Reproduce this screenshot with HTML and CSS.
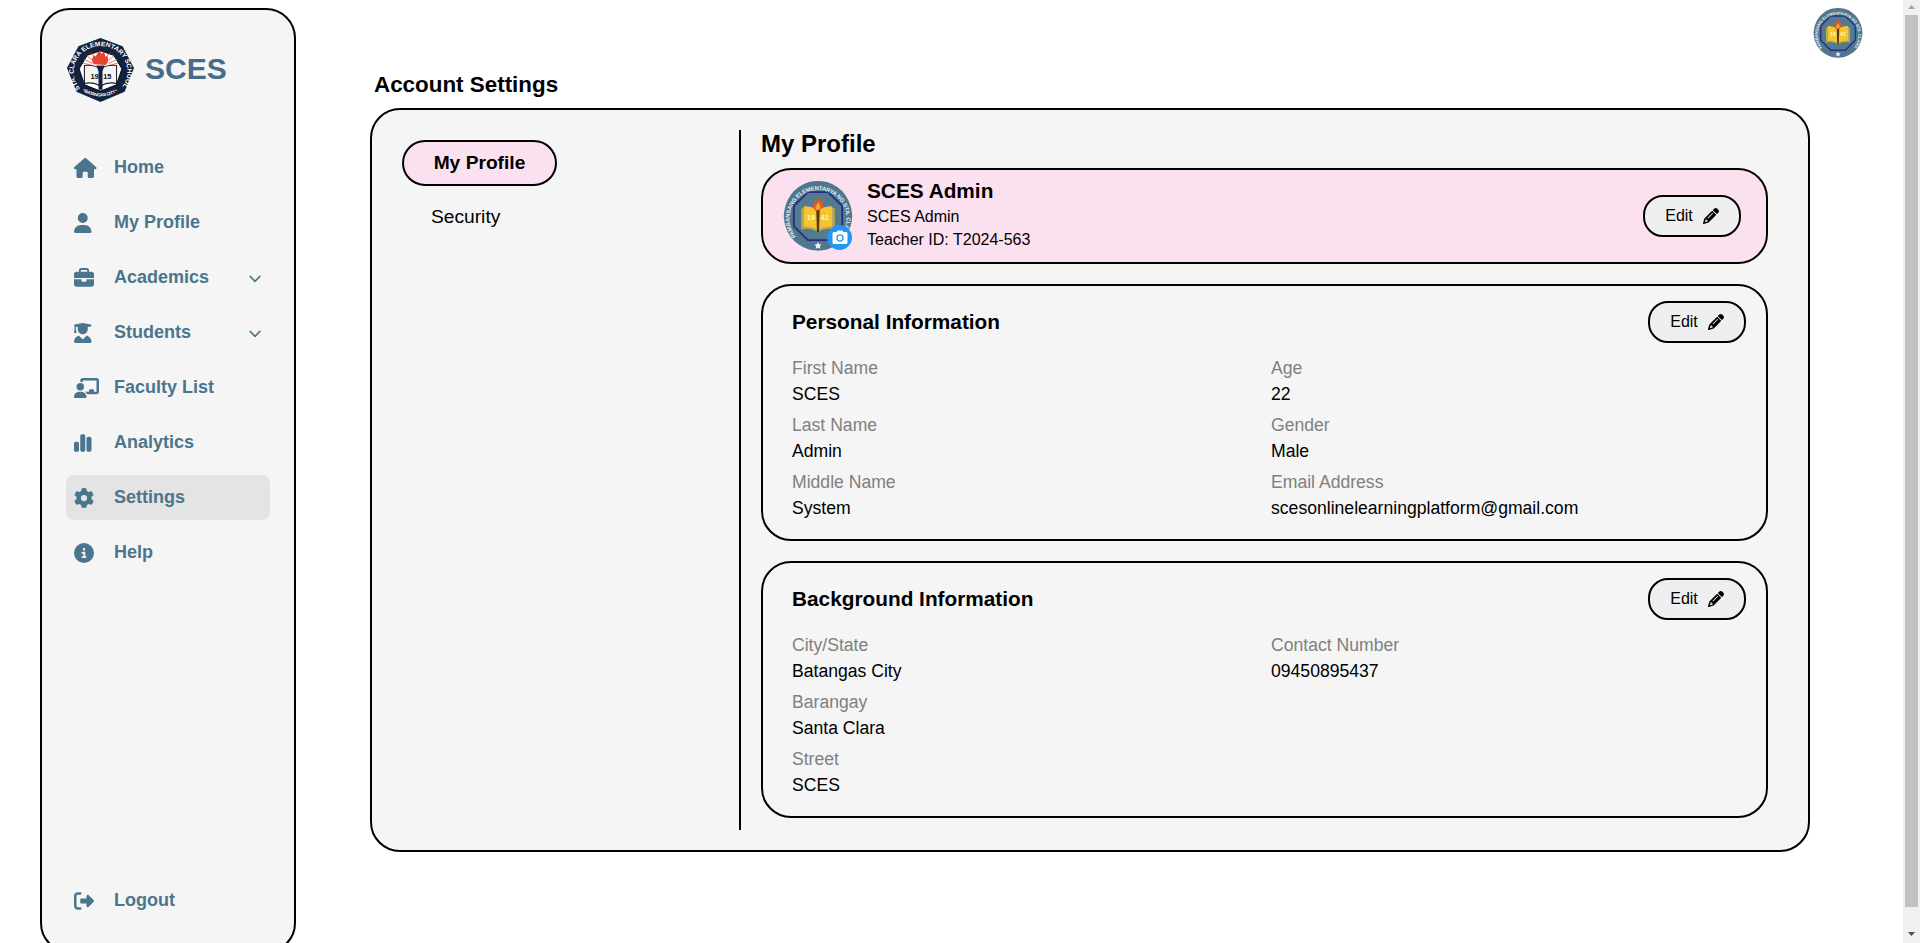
FILE: index.html
```html
<!DOCTYPE html>
<html lang="en">
<head>
<meta charset="utf-8">
<title>Account Settings</title>
<link rel="stylesheet" href="styles.css">
</head>
<body>
<svg width="0" height="0" class="defs">
  <defs>
    <symbol id="pencil" viewBox="0 0 512 512"><path d="M410.3 231l11.3-11.3-33.9-33.9-62.1-62.1L291.7 89.8l-11.3 11.3-22.6 22.6L58.6 322.9c-10.4 10.4-18 23.3-22.2 37.4L1 480.7c-2.5 8.4-.2 17.5 6.1 23.7s15.3 8.5 23.7 6.1l120.3-35.4c14.1-4.2 27-11.8 37.4-22.2L387.7 253.7 410.3 231zM160 399.4l-9.1 22.7c-4 3.1-8.5 5.4-13.3 6.9L59.4 452l23-78.1c1.4-4.9 3.8-9.4 6.9-13.3l22.7-9.1v32c0 8.8 7.2 16 16 16h32zM362.7 18.7L348.3 33.2 325.7 55.8 314.3 67.1l33.9 33.9 62.1 62.1 33.9 33.9 11.3-11.3 22.6-22.6 14.5-14.5c25-25 25-65.5 0-90.5L453.3 18.7c-25-25-65.5-25-90.5 0zm-47.4 168l-144 144c-6.2 6.2-16.4 6.2-22.6 0s-6.2-16.4 0-22.6l144-144c6.2-6.2 16.4-6.2 22.6 0s6.2 16.4 0 22.6z"/></symbol>
    <symbol id="chevron" viewBox="0 0 16 16"><path fill="none" stroke="currentColor" stroke-width="1.8" stroke-linecap="round" stroke-linejoin="round" d="M2.5 5 8 10.7 13.5 5"/></symbol>
    <path id="seal-arc" d="M18.7 79.3A40.5 40.5 0 1 1 81.3 79.3"/>
    <symbol id="seal" viewBox="0 0 100 100">
      <path fill="#4f788e" d="M37 1.5Q50-1.5 63 1.5Q80 7 89 20Q98 33 99 50Q98 67 89 80Q80 92 63 98Q50 101 37 98Q20 92 11 80Q2 67 1 50Q2 33 11 20Q20 7 37 1.5Z"/>
      <path fill="#527b90" stroke="#272d85" stroke-width="2.6" d="M35.500 16H64.500L84.500 35.500V64.500L64.500 84.500H35.500L15.500 64.500V35.500Z"/>
      <text class="seal-text"><textPath href="#seal-arc" textLength="181" lengthAdjust="spacing">PAMBANSANG ELEMENTARYA NG STA. CLARA</textPath></text>
      <path fill="#b9a956" d="M26 40 30 37 50 44 70 37 74 40V69Q60 66 50 73Q40 66 26 69Z"/>
      <path fill="#f3c62f" d="M30 36Q42 36 49 41V69Q41 65 30 65ZM70 36Q58 36 51 41V69Q59 65 70 65Z"/>
      <path fill="#5a3517" d="M47.500 41H52.500L51.500 73H48.500Z"/>
      <path fill="#e8561d" d="M46 42C39 34 45 31 46 27C48 29 47 31 48 31C51 28 50 24 49 21C54 24 53 28 55 31L56 28C60 35 56 37 53 42Z"/>
      <path fill="#f5a52b" d="M48 41C44 36 49 35 50 30C54 35 54 38 52 41Z"/>
      <text class="seal-year" x="34" y="55">19</text><text class="seal-year" x="54" y="55">41</text>
      <path fill="#f2f3ea" d="m50 87 1.600 3.300 3.600.5-2.600 2.500.6 3.600-3.200-1.700-3.200 1.700.6-3.600-2.600-2.500 3.600-.5Z"/>
    </symbol>
    <path id="crest-top" d="M20 79A40 40 0 1 1 80 79"/>
    <path id="crest-bottom" d="M23 82A44 44 0 0 0 77 82"/>
  </defs>
</svg>
<div class="page">
  <aside class="sidebar">
    <div class="brand">
      <svg class="brand-logo" viewBox="0 0 100 100" preserveAspectRatio="none">
        <path fill="#10233f" d="M50 0 83 13 100 47 86 84 50 100 14 84 0 47 17 13Z"/>
        <path fill="#fff" stroke="#050d18" stroke-width="1.500" d="M50 20 70 27 82 48 74 73 50 83 26 73 18 48 30 27Z"/>
        <path fill="none" stroke="#e84b3c" stroke-width="1.200" d="M38 40 25 33M38 35 29 27M42 30 35 23M62 40 75 33M62 35 71 27M58 30 65 23M37 43 24 39M63 43 76 39"/>
        <path fill="#f4f4f2" stroke="#1b222d" stroke-width="1.600" d="M26 43Q39 41 50 48Q61 41 74 43V71Q61 68 50 75Q39 68 26 71Z"/>
        <path fill="#10233f" d="M44 43H56L53 52V81H47V52Z"/>
        <path fill="#e8452f" d="M40 41C35 34 39 30 40 27L43 29C45 24 46 22 50 20L51 25 54 22C59 26 55 29 58 29L60 28C63 34 61 39 58 42Z"/>
        <text class="crest-year" x="35" y="64">19</text><text class="crest-year" x="54" y="64">15</text>
        <text class="crest-text"><textPath href="#crest-top" textLength="179" lengthAdjust="spacing">STA. CLARA ELEMENTARY SCHOOL</textPath></text>
        <text class="crest-text crest-city"><textPath href="#crest-bottom" textLength="56" lengthAdjust="spacing">• BATANGAS CITY •</textPath></text>
      </svg>
      <span class="brand-name">SCES</span>
    </div>
    <nav class="nav">
      <a class="nav-item"><svg class="icon" viewBox="0 0 576 512"><path d="M575.8 255.500c0 18-15 32.100-32 32.100h-32l.7 160.200c0 2.700-.2 5.400-.5 8.100V472c0 22.100-17.900 40-40 40H456c-1.100 0-2.200 0-3.300-.1c-1.400 .1-2.800 .1-4.200 .1H416 392c-22.100 0-40-17.900-40-40V448 384c0-17.700-14.300-32-32-32H256c-17.700 0-32 14.300-32 32v64 24c0 22.100-17.900 40-40 40H160 128.100c-1.500 0-3-.1-4.500-.2c-1.200 .1-2.400 .2-3.600 .2H104c-22.100 0-40-17.900-40-40V360c0-.9 0-1.900 .1-2.800V287.600H32c-18 0-32-14-32-32.100c0-9 3-17 10-24L266.400 8c7-7 15-8 22-8s15 2 21 7L564.800 231.500c8 7 12 15 11 24z"/></svg>Home</a>
      <a class="nav-item"><svg class="icon" viewBox="0 0 448 512"><path d="M224 256A128 128 0 1 0 224 0a128 128 0 1 0 0 256zm-45.700 48C79.800 304 0 383.800 0 482.300C0 498.700 13.300 512 29.700 512H418.300c16.400 0 29.700-13.300 29.700-29.700C448 383.800 368.200 304 269.700 304H178.300z"/></svg>My Profile</a>
      <a class="nav-item"><svg class="icon" viewBox="0 0 512 512"><path d="M184 48H328c4.400 0 8 3.600 8 8V96H176V56c0-4.400 3.600-8 8-8zm-56 8V96H64C28.700 96 0 124.700 0 160v96H192 320 512V160c0-35.300-28.700-64-64-64H384V56c0-30.900-25.100-56-56-56H184c-30.900 0-56 25.100-56 56zM512 288H320v32c0 17.700-14.300 32-32 32H224c-17.700 0-32-14.300-32-32V288H0V416c0 35.300 28.700 64 64 64H448c35.300 0 64-28.700 64-64V288z"/></svg>Academics<svg class="chevron"><use href="#chevron"/></svg></a>
      <a class="nav-item"><svg class="icon" viewBox="0 0 448 512"><path d="M219.300 .5c3.100-.6 6.300-.6 9.400 0l200 40C439.900 42.700 448 52.600 448 64s-8.100 21.300-19.300 23.500L352 102.900V160c0 70.700-57.300 128-128 128s-128-57.300-128-128V102.900L48 93.300v65.100l15.700 78.400c.9 4.700-.3 9.600-3.300 13.300s-7.600 5.900-12.400 5.900H16c-4.800 0-9.300-2.100-12.400-5.900s-4.300-8.600-3.300-13.300L16 158.400V86.600C6.500 83.300 0 74.300 0 64C0 52.600 8.100 42.700 19.300 40.500l200-40zM111.900 327.700c10.500-3.400 21.800 .4 29.400 8.500l71 75.500c6.300 6.700 17 6.700 23.300 0l71-75.500c7.600-8.100 18.900-11.900 29.400-8.500C401 348.600 448 409.400 448 481.300c0 17-13.800 30.700-30.700 30.700H30.700C13.800 512 0 498.200 0 481.300c0-71.900 47-132.700 111.900-153.600z"/></svg>Students<svg class="chevron"><use href="#chevron"/></svg></a>
      <a class="nav-item"><svg class="icon" viewBox="0 0 640 512"><path d="M160 64c0-35.300 28.700-64 64-64H576c35.300 0 64 28.700 64 64V352c0 35.300-28.700 64-64 64H336.800c-11.800-25.500-29.900-47.500-52.400-64H384V320c0-17.700 14.300-32 32-32h64c17.700 0 32 14.300 32 32v32h64V64L224 64v49.100C205.200 102.200 183.300 96 160 96V64zm0 64a96 96 0 1 1 0 192 96 96 0 1 1 0-192zM133.300 352h53.300C260.300 352 320 411.700 320 485.300c0 14.700-11.900 26.700-26.700 26.700H26.700C11.900 512 0 500.100 0 485.300C0 411.700 59.700 352 133.300 352z"/></svg>Faculty List</a>
      <a class="nav-item"><svg class="icon" viewBox="0 0 448 512"><path d="M160 80c0-26.500 21.500-48 48-48h32c26.500 0 48 21.500 48 48V432c0 26.500-21.500 48-48 48H208c-26.500 0-48-21.500-48-48V80zM0 272c0-26.500 21.500-48 48-48H80c26.500 0 48 21.500 48 48V432c0 26.500-21.500 48-48 48H48c-26.500 0-48-21.500-48-48V272zM368 96h32c26.500 0 48 21.500 48 48V432c0 26.500-21.500 48-48 48H368c-26.500 0-48-21.500-48-48V144c0-26.500 21.500-48 48-48z"/></svg>Analytics</a>
      <a class="nav-item active"><svg class="icon" viewBox="0 0 512 512"><path d="M495.900 166.600c3.200 8.700 .5 18.400-6.400 24.600l-43.300 39.400c1.100 8.300 1.700 16.800 1.700 25.400s-.6 17.100-1.700 25.400l43.300 39.400c6.900 6.200 9.600 15.900 6.400 24.600c-4.400 11.900-9.700 23.300-15.800 34.300l-4.700 8.100c-6.600 11-14 21.400-22.100 31.200c-5.900 7.200-15.700 9.600-24.500 6.800l-55.700-17.700c-13.400 10.300-28.200 18.900-44 25.400l-12.500 57.100c-2 9.100-9 16.300-18.200 17.800c-13.800 2.300-28 3.500-42.500 3.500s-28.700-1.200-42.500-3.500c-9.200-1.500-16.200-8.700-18.200-17.800l-12.500-57.100c-15.800-6.500-30.600-15.100-44-25.400L83.100 425.900c-8.800 2.800-18.600 .3-24.500-6.800c-8.100-9.800-15.500-20.200-22.100-31.200l-4.700-8.100c-6.100-11-11.400-22.400-15.800-34.300c-3.200-8.700-.5-18.400 6.400-24.600l43.300-39.400C64.600 273.100 64 264.600 64 256s.6-17.100 1.700-25.400L22.400 191.200c-6.900-6.200-9.600-15.900-6.400-24.600c4.400-11.900 9.700-23.300 15.800-34.300l4.700-8.100c6.600-11 14-21.400 22.100-31.200c5.900-7.200 15.700-9.600 24.500-6.800l55.700 17.700c13.400-10.300 28.200-18.900 44-25.400l12.500-57.100c2-9.100 9-16.300 18.200-17.800C227.300 1.200 241.500 0 256 0s28.700 1.200 42.500 3.500c9.200 1.500 16.200 8.700 18.200 17.800l12.500 57.100c15.800 6.500 30.600 15.100 44 25.400l55.700-17.700c8.800-2.800 18.600-.3 24.500 6.800c8.100 9.800 15.500 20.200 22.100 31.200l4.700 8.100c6.100 11 11.400 22.400 15.800 34.300zM256 336a80 80 0 1 0 0-160 80 80 0 1 0 0 160z"/></svg>Settings</a>
      <a class="nav-item"><svg class="icon" viewBox="0 0 512 512"><path d="M256 512A256 256 0 1 0 256 0a256 256 0 1 0 0 512zM216 336h24V272H216c-13.300 0-24-10.700-24-24s10.700-24 24-24h48c13.300 0 24 10.700 24 24v88h8c13.300 0 24 10.700 24 24s-10.700 24-24 24H216c-13.300 0-24-10.700-24-24s10.700-24 24-24zm40-208a32 32 0 1 1 0 64 32 32 0 1 1 0-64z"/></svg>Help</a>
      <a class="nav-item logout"><svg class="icon" viewBox="0 0 512 512"><path d="M377.900 105.900L500.700 228.700c7.200 7.200 11.300 17.100 11.300 27.300s-4.100 20.100-11.300 27.300L377.900 406.100c-6.400 6.400-15 9.900-24 9.900c-18.700 0-33.900-15.200-33.900-33.900l0-62.100-128 0c-17.700 0-32-14.300-32-32l0-64c0-17.700 14.300-32 32-32l128 0 0-62.100c0-18.700 15.200-33.900 33.900-33.900c9 0 17.600 3.600 24 9.900zM160 96L96 96c-17.700 0-32 14.300-32 32l0 256c0 17.700 14.300 32 32 32l64 0c17.700 0 32 14.300 32 32s-14.300 32-32 32l-64 0c-53 0-96-43-96-96L0 128C0 75 43 32 96 32l64 0c17.700 0 32 14.300 32 32s-14.300 32-32 32z"/></svg>Logout</a>
    </nav>
  </aside>

  <main class="main">
    <header class="topbar"><svg class="avatar-small"><use href="#seal"/></svg></header>
    <h1 class="page-title">Account Settings</h1>
    <div class="settings">
      <div class="tabs">
        <div class="tab tab-active">My Profile</div>
        <div class="tab">Security</div>
      </div>
      <div class="content">
        <h2 class="content-title">My Profile</h2>
        <section class="card profile">
          <div class="avatar">
            <svg class="avatar-img"><use href="#seal"/></svg>
            <span class="camera"><svg viewBox="0 0 24 24" width="18" height="18" fill="#fff"><circle cx="12" cy="12" r="3.200"/><path d="M9 2L7.170 4H4c-1.100 0-2 .9-2 2v12c0 1.100.9 2 2 2h16c1.100 0 2-.9 2-2V6c0-1.100-.9-2-2-2h-3.170L15 2H9zm3 15c-2.760 0-5-2.240-5-5s2.240-5 5-5 5 2.240 5 5-2.240 5-5 5z"/></svg></span>
          </div>
          <div class="profile-text">
            <h3 class="profile-name">SCES Admin</h3>
            <p class="profile-line">SCES Admin</p>
            <p class="profile-line">Teacher ID: T2024-563</p>
          </div>
          <button class="edit">Edit<svg class="pencil"><use href="#pencil"/></svg></button>
        </section>
        <section class="card info">
          <div class="info-head"><h3 class="info-title">Personal Information</h3><button class="edit">Edit<svg class="pencil"><use href="#pencil"/></svg></button></div>
          <div class="fields">
            <dl class="field"><dt>First Name</dt><dd>SCES</dd></dl>
            <dl class="field"><dt>Age</dt><dd>22</dd></dl>
            <dl class="field"><dt>Last Name</dt><dd>Admin</dd></dl>
            <dl class="field"><dt>Gender</dt><dd>Male</dd></dl>
            <dl class="field"><dt>Middle Name</dt><dd>System</dd></dl>
            <dl class="field"><dt>Email Address</dt><dd>scesonlinelearningplatform@gmail.com</dd></dl>
          </div>
        </section>
        <section class="card info">
          <div class="info-head"><h3 class="info-title">Background Information</h3><button class="edit">Edit<svg class="pencil"><use href="#pencil"/></svg></button></div>
          <div class="fields">
            <dl class="field"><dt>City/State</dt><dd>Batangas City</dd></dl>
            <dl class="field"><dt>Contact Number</dt><dd>09450895437</dd></dl>
            <dl class="field field-wide"><dt>Barangay</dt><dd>Santa Clara</dd></dl>
            <dl class="field field-wide"><dt>Street</dt><dd>SCES</dd></dl>
          </div>
        </section>
      </div>
    </div>
  </main>

  <div class="scrollbar">
    <svg class="arrow" viewBox="0 0 17 15"><path fill="#a3a3a3" d="M8.500 5 12 9H5Z"/></svg>
    <div class="thumb"></div>
    <svg class="arrow arrow-down" viewBox="0 0 17 15"><path fill="#505050" d="M5 5H12L8.500 9Z"/></svg>
  </div>
</div>
</body>
</html>
```
FILE: styles.css
```css
* { box-sizing: border-box; margin: 0; padding: 0; }

body {
  height: 943px;
  overflow: hidden;
  background: #fff;
  color: #000;
  font-family: "Liberation Sans", Arial, sans-serif;
}

.defs { display: block; height: 0; }

.page { display: flex; height: 943px; overflow: hidden; }

.sidebar {
  flex: none;
  display: flex;
  flex-direction: column;
  width: 256px;
  height: 945px;
  margin: 8px 0 0 40px;
  padding: 27px 24px 28px;
  background: #f5f5f5;
  border: 2px solid #000;
  border-radius: 30px;
}

.brand { display: flex; align-items: center; height: 65px; padding-left: 1px; gap: 11px; }
.brand-logo { width: 67px; height: 64px; }
.brand-name { font-size: 30px; font-weight: bold; line-height: 60px; padding-bottom: 2px; color: #466c88; }
.crest-text { font-size: 10px; font-weight: bold; fill: #fff; }
.crest-city { font-size: 7px; }
.crest-year { font-size: 11px; font-weight: bold; fill: #111; }

.nav { display: flex; flex-direction: column; flex: 1; gap: 10px; margin-top: 43px; }
.nav-item {
  display: flex;
  align-items: center;
  flex: none;
  height: 45px;
  padding: 0 8px;
  border-radius: 8px;
  font-size: 18px;
  font-weight: bold;
  color: #4b758c;
}
.nav-item.active { background: #e4e4e4; }
.logout { margin-top: auto; }
.icon { height: 20px; margin-right: auto; fill: currentColor; }
.nav-item { display: grid; grid-template-columns: 40px 1fr 14px; }
.chevron { width: 14px; height: 14px; margin-top: 3px; }

.main { flex: 1; padding: 8px 40px 0 74px; }
.topbar { display: flex; justify-content: flex-end; height: 50px; }
.avatar-small { width: 50px; height: 50px; }
.page-title { padding: 3px 0 0 4px; font-size: 22.4px; line-height: 47px; }

.settings {
  display: flex;
  width: 1440px;
  height: 744px;
  padding: 20px 40px 20px 30px;
  background: #f5f5f5;
  border: 2px solid #000;
  border-radius: 30px;
}
.tabs { width: 339px; padding-top: 10px; border-right: 2px solid #000; font-size: 19.2px; }
.tab { width: 155px; height: 41px; margin-top: 10px; padding-left: 29px; line-height: 41px; }
.tab-active {
  height: 46px;
  margin-top: 0;
  padding: 0;
  line-height: 42px;
  text-align: center;
  font-weight: bold;
  background: #fbe0ef;
  border: 2px solid #000;
  border-radius: 23px;
}
.content { flex: 1; padding-left: 20px; }
.content-title { margin-bottom: 10px; font-size: 24px; line-height: 28px; }

.card { border: 2px solid #000; border-radius: 30px; background: #f5f5f5; }
.card + .card { margin-top: 20px; }

.profile { display: flex; align-items: center; height: 96px; padding: 0 25px 0 20px; background: #fbe0ef; }
.avatar { position: relative; width: 70px; height: 70px; }
.avatar-img { display: block; width: 70px; height: 70px; }
.camera {
  position: absolute;
  right: 1px;
  bottom: 1px;
  display: flex;
  align-items: center;
  justify-content: center;
  width: 25px;
  height: 25px;
  border-radius: 50%;
  background: #2196f3;
}
.profile-text { flex: 1; padding: 0 0 4px 14px; }
.profile-name { font-size: 20.8px; line-height: 28px; }
.profile-line { font-size: 16px; line-height: 23px; }

.edit {
  display: flex;
  align-items: center;
  justify-content: center;
  gap: 10px;
  width: 98px;
  height: 42px;
  border: 2px solid #000;
  border-radius: 20px;
  background: #efefef;
  color: #000;
  font: 16px "Liberation Sans", Arial, sans-serif;
}
.pencil { width: 16px; height: 16px; }

.info { height: 257px; padding: 15px 20px 0 29px; }
.info-head { display: flex; align-items: center; justify-content: space-between; height: 42px; margin-bottom: 12px; }
.info-title { font-size: 20.8px; line-height: 42px; }
.fields { display: grid; grid-template-columns: 479px 1fr; row-gap: 5px; font-size: 17.6px; line-height: 26px; }
.field dt { color: #808080; }
.field-wide { grid-column: 1 / -1; }

.seal-text { font-size: 8.2px; font-weight: bold; fill: #e3edf0; }
.seal-year { font-size: 10.5px; font-weight: bold; fill: #fff8d0; }

.scrollbar { display: flex; flex-direction: column; align-items: center; flex: none; width: 17px; height: 943px; background: #f0f0f0; }
.arrow { width: 17px; height: 15px; }
.thumb { width: 13px; height: 892px; background: #c1c1c1; }
.arrow-down { margin-top: 20px; }
```
